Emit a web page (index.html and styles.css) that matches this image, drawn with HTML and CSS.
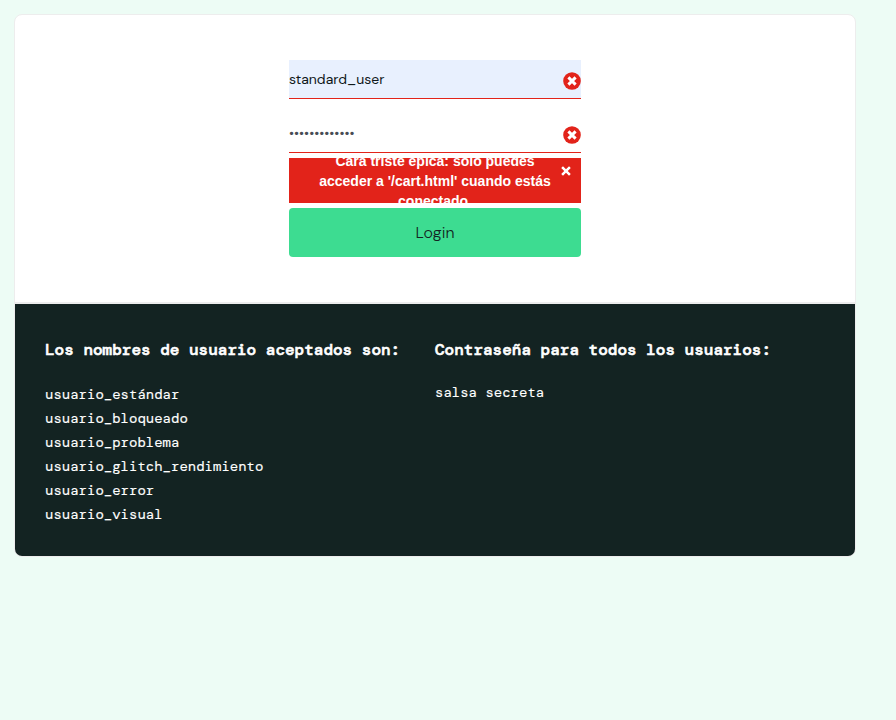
FILE: index.html
```html
<!DOCTYPE html>
<html lang="es">
<head>
<meta charset="utf-8">
<title>Login</title>
<link rel="stylesheet" href="styles.css">
</head>
<body>
<main class="card">
  <section class="login">
    <form class="form">
      <div class="field filled"><span class="value">standard_user</span>
        <svg class="icon" viewBox="0 0 18 18"><circle cx="9" cy="9" r="8.8" fill="#e2231a"/><path d="M5.4 5.4l7.2 7.2M12.6 5.4l-7.2 7.2" stroke="#fff" stroke-width="3"/></svg>
      </div>
      <div class="field"><span class="value dots">•••••••••••••</span>
        <svg class="icon" viewBox="0 0 18 18"><circle cx="9" cy="9" r="8.8" fill="#e2231a"/><path d="M5.4 5.4l7.2 7.2M12.6 5.4l-7.2 7.2" stroke="#fff" stroke-width="3"/></svg>
      </div>
      <div class="error">
        <h3 class="message"><span class="line">Cara triste épica: sólo puedes</span><span class="line">acceder a '/cart.html' cuando estás</span><span class="line">conectado.</span></h3>
        <svg class="close" viewBox="0 0 10 10"><path d="M1.1 1.1l7.8 7.8M8.9 1.1L1.1 8.9" stroke="#fff" stroke-width="2.5"/></svg>
      </div>
      <div class="button">Login</div>
    </form>
  </section>
  <section class="credentials">
    <div class="users">
      <h4 class="title">Los nombres de usuario aceptados son:</h4>
      <ul class="list"><li>usuario_estándar</li><li>usuario_bloqueado</li><li>usuario_problema</li><li>usuario_glitch_rendimiento</li><li>usuario_error</li><li>usuario_visual</li></ul>
    </div>
    <div class="password">
      <h4 class="title">Contraseña para todos los usuarios:</h4>
      <p class="secret">salsa secreta</p>
    </div>
  </section>
</main>
</body>
</html>
```
FILE: styles.css
```css
* { box-sizing: border-box; }
body { margin: 0; padding: 14px; min-height: 720px; background: #edfcf5; }
.card { width: 842px; height: 543px; background: #fff; border: 1px solid #ededed; border-radius: 8px; overflow: hidden; }
.login { height: 289px; padding-top: 45px; border-bottom: 2px solid #ededed; }
.form { width: 292px; margin: 0 auto; }
.field { display: flex; align-items: center; justify-content: space-between; height: 39px; border-bottom: 1px solid #e2231a; margin-bottom: 15px; font: 14px/20px "DM Sans", "Open Sans", sans-serif; color: #10181a; }
.field + .field { margin-bottom: 5px; }
.filled { background: #e8f0fe; }
.dots { color: #484c55; }
.icon { width: 18px; height: 18px; margin-top: 3px; }
.error { position: relative; height: 45px; background: #e2231a; overflow: hidden; }
.message { margin: -7px 0 0; font: bold 14px/20px "Liberation Sans", sans-serif; color: #fff; text-align: center; }
.line { display: block; white-space: nowrap; }
.close { position: absolute; right: 10.5px; top: 7.5px; width: 10px; height: 10px; }
.button { display: flex; align-items: center; justify-content: center; height: 49px; margin-top: 5px; border-radius: 4px; background: #3ddc91; font: 300 16px/20px "DM Sans", "Open Sans", sans-serif; letter-spacing: 0.1px; color: #132322; }
.credentials { display: flex; height: 252px; padding: 0 30px; background: #132322; color: #fff; }
.users, .password { width: 390px; flex: none; }
.title { margin: 36px 0 0; font: bold 16px/20px "DM Mono", "Liberation Mono", monospace; white-space: nowrap; -webkit-text-stroke: 0.6px #fff; }
.list { margin: 22px 0 0; padding: 0; list-style: none; font: 14px/24px "DM Mono", "Liberation Mono", monospace; -webkit-text-stroke: 0.15px #fff; }
.secret { margin: 20px 0 0; font: 14px/24px "DM Mono", "Liberation Mono", monospace; -webkit-text-stroke: 0.15px #fff; }
```
